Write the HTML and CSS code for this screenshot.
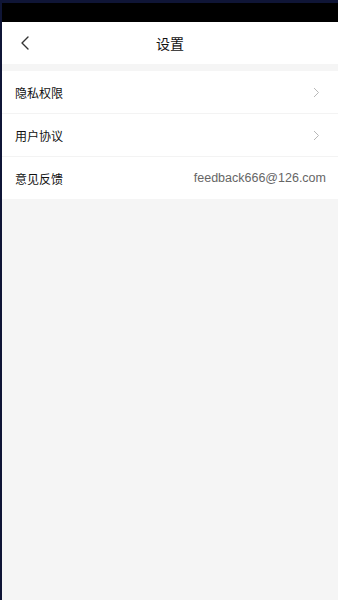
FILE: index.html
```html
<!DOCTYPE html>
<html lang="zh">
<head>
<meta charset="utf-8">
<link rel="stylesheet" href="styles.css">
</head>
<body>
<div class="frame">
  <div class="statusbar"></div>
  <header class="navbar">
    <span class="back">
      <svg width="10" height="14" viewBox="0 0 10 14"><path d="M8 1 L2 7 L8 13" fill="none" stroke="#333" stroke-width="1.4" stroke-linecap="round" stroke-linejoin="round"/></svg>
    </span>
    <h1 class="title">设置</h1>
  </header>
  <div class="list">
    <div class="row">
      <span class="label">隐私权限</span>
      <svg class="chev" width="7" height="11" viewBox="0 0 7 11"><path d="M1 1 L5.5 5.5 L1 10" fill="none" stroke="#b8b8b8" stroke-width="1"/></svg>
    </div>
    <div class="row">
      <span class="label">用户协议</span>
      <svg class="chev" width="7" height="11" viewBox="0 0 7 11"><path d="M1 1 L5.5 5.5 L1 10" fill="none" stroke="#b8b8b8" stroke-width="1"/></svg>
    </div>
    <div class="row">
      <span class="label">意见反馈</span>
      <span class="value">feedback666@126.com</span>
    </div>
  </div>
</div>
</body>
</html>
```
FILE: styles.css
```css
html, body {
  margin: 0;
  padding: 0;
  height: 100%;
}
body {
  background: #0f1536;
  padding: 3px 0 0 2px;
  box-sizing: border-box;
  font-family: "Liberation Sans", "Noto Sans CJK SC", sans-serif;
}
.frame {
  height: 100%;
  background: #f5f5f5;
  display: flex;
  flex-direction: column;
}
.statusbar {
  height: 19px;
  background: #000;
}
.navbar {
  height: 42px;
  background: #fff;
  display: flex;
  align-items: center;
  justify-content: center;
  position: relative;
}
.back {
  position: absolute;
  left: 18px;
  top: 14px;
  display: flex;
}
.title {
  margin: 0;
  font-size: 14px;
  font-weight: normal;
  color: #111;
  font-family: "Noto Sans CJK SC", sans-serif;
  line-height: 1;
}
.list {
  margin-top: 7px;
  background: #fff;
}
.row {
  height: 42px;
  display: flex;
  align-items: center;
  justify-content: space-between;
  padding: 0 12px 0 13px;
  border-bottom: 1px solid #f3f3f3;
}
.row:last-child {
  border-bottom: none;
}
.label {
  font-family: "Noto Sans CJK SC", sans-serif;
  font-size: 12px;
  color: #111;
}
.chev {
  margin-right: 6px;
}
.value {
  font-size: 12.5px;
  color: #666;
}
```
